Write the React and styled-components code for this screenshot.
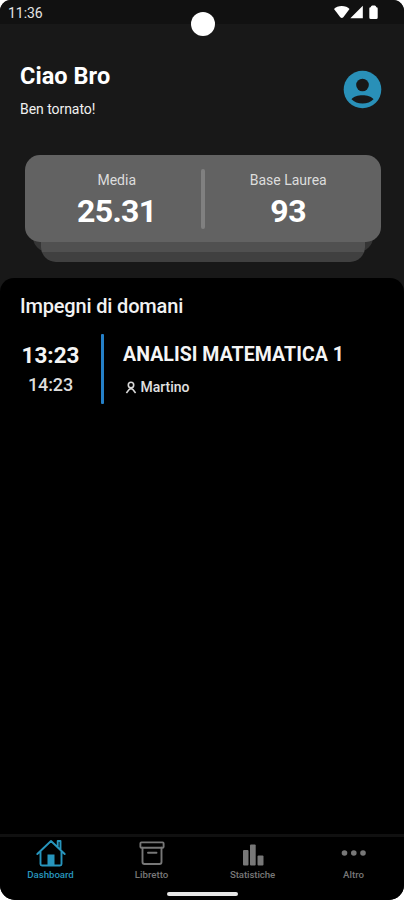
import React from "react";
import styled, { createGlobalStyle } from "styled-components";

const GlobalStyle = createGlobalStyle`
  * { box-sizing: border-box; }
  body { margin: 0; background: #fff; font-family: Roboto, sans-serif; }
`;

const Screen = styled.div`
  width: 404px;
  height: 900px;
  display: flex;
  flex-direction: column;
  overflow: hidden;
  border-radius: 11px 11px 15px 15px;
  background: #181818;
  color: #fff;
`;

const StatusBar = styled.header`
  height: 24px;
  flex: none;
  display: flex;
  justify-content: space-between;
  padding: 5px 25px 0 8px;
  background: #111;
  position: relative;
`;

const CameraHole = styled.span`
  position: absolute;
  left: 191px;
  top: 12px;
  width: 24px;
  height: 24px;
  border-radius: 50%;
  background: #fff;
`;

const Text = styled.span`
  display: block;
  margin: 0;
  white-space: nowrap;
  font-size: ${(p) => p.$size}px;
  line-height: ${(p) => p.$line}px;
  font-weight: ${(p) => p.$weight || 400};
  letter-spacing: ${(p) => p.$track || 0}px;
  color: ${(p) => p.$color || "#fff"};
`;

const Greeting = styled.section`
  height: 131px;
  flex: none;
  display: flex;
  justify-content: space-between;
  padding: 38px 22px 0 20px;
`;

const GreetingText = styled.div`
  display: flex;
  flex-direction: column;
  gap: 9px;
`;

const Avatar = styled.svg`
  width: 39px;
  height: 39px;
  margin-top: 8px;
`;

const CardStack = styled.section`
  height: 123px;
  flex: none;
  display: grid;
  padding-left: 25px;
  align-items: start;
`;

const Sheet = styled.div`
  grid-area: 1 / 1;
  width: ${(p) => p.$width}px;
  height: ${(p) => p.$height}px;
  margin-left: ${(p) => p.$inset}px;
  border-radius: 15px;
  background: ${(p) => p.$color};
`;

const SummaryCard = styled(Sheet)`
  display: grid;
  grid-template-columns: 175.5px 4px 1fr;
  padding-top: 14px;
`;

const Stat = styled.div`
  display: flex;
  flex-direction: column;
  align-items: center;
  padding-top: 2px;
  padding-left: ${(p) => p.$shift || 0}px;
  padding-right: ${(p) => p.$pull || 0}px;
  gap: 5px;
`;

const Divider = styled.div`
  width: 4px;
  height: 60px;
  border-radius: 2px;
  background: #808080;
`;

const Agenda = styled.main`
  flex: 1;
  padding: 16px 20px 0;
  border-radius: 14px 14px 0 0;
  background: #000;
`;

const Event = styled.article`
  display: grid;
  grid-template-columns: 61px 3px 1fr;
  column-gap: 19.5px;
  height: 70px;
  margin-top: 16px;
`;

const Times = styled.div`
  display: flex;
  flex-direction: column;
  align-items: center;
  padding-top: 8px;
  gap: 6px;
`;

const EventBar = styled.div`
  border-radius: 1px;
  background: #2580c8;
`;

const Details = styled.div`
  display: flex;
  flex-direction: column;
  padding-top: 7px;
  gap: 10px;
`;

const Teacher = styled.div`
  display: flex;
  align-items: center;
  gap: 4px;
  padding-left: 1.5px;
`;

const BottomNav = styled.nav`
  height: 66px;
  flex: none;
  display: grid;
  grid-template-columns: repeat(4, 1fr);
  border-top: 3px solid #101010;
  background: #000;
  position: relative;
`;

const NavItem = styled.div`
  display: flex;
  flex-direction: column;
  align-items: center;
  color: ${(p) => (p.$active ? "#2795bd" : "#777")};
`;

const NavIcon = styled.svg`
  width: 32px;
  height: 32px;
  flex: none;
`;

const HomeIndicator = styled.span`
  position: absolute;
  left: 167px;
  top: 54.5px;
  width: 71px;
  height: 4px;
  border-radius: 2px;
  background: #e7e7e7;
`;

const icons = {
  home: (
    <g fill="none" stroke="currentColor" strokeWidth="1.9" strokeLinecap="round" strokeLinejoin="round">
      <path d="M2.3 17 16 4 29.7 17M5.5 14.5V27q0 1.5 1.5 1.5h18q1.5 0 1.5-1.5V14.5M22.7 9.5V4h2.8v8.5" />
      <path d="M12.5 17.5h7v11h-7z" fill="currentColor" stroke="none" />
    </g>
  ),
  archive: (
    <g fill="none" stroke="currentColor" strokeWidth="1.9">
      <rect x="4.4" y="5.4" width="23.2" height="5.3" rx="1" />
      <path d="M6.5 10.7V25q0 2 2 2h15q2 0 2-2V10.7M12 15.8h8.5" strokeLinecap="round" />
    </g>
  ),
  chart: (
    <g fill="currentColor">
      <rect x="6" y="13" width="5.5" height="15.5" rx="1" />
      <rect x="13" y="7.5" width="5.7" height="21" rx="1" />
      <rect x="20.5" y="18.5" width="6" height="10" rx="1" />
    </g>
  ),
  more: (
    <g fill="currentColor">
      <circle cx="6.5" cy="16" r="2.8" />
      <circle cx="15.8" cy="16" r="2.8" />
      <circle cx="25" cy="16" r="2.8" />
    </g>
  ),
};

const tabs = [
  { label: "Dashboard", icon: "home", active: true, track: -0.05 },
  { label: "Libretto", icon: "archive", track: 0 },
  { label: "Statistiche", icon: "chart", track: -0.1 },
  { label: "Altro", icon: "more", track: 0 },
];

export default function App() {
  return (
    <>
      <GlobalStyle />
      <Screen>
        <StatusBar>
          <Text $size={14} $line={16} $track={-0.05} $color="#e4e4e4">11:36</Text>
          <svg width="47" height="16" fill="#fff">
            <path d="M2 4.1C5-.1 14.5-.1 17.5 4.1L11.3 12.2Q9.8 13.6 8.3 12.2Z" />
            <path d="M18.3 13.2 30.8.7v12.5z" />
            <path d="M37.3 3.5Q37.3 2.2 38.6 2.2 39.2.6 40.2.6h2.6q1 0 1.6 1.6Q45.7 2.2 45.7 3.5v9q0 1.5-1.5 1.5h-5.4q-1.5 0-1.5-1.5Z" />
          </svg>
          <CameraHole />
        </StatusBar>
        <Greeting>
          <GreetingText>
            <Text as="h1" $size={23.5} $line={29} $weight={700} $track={0.05}>Ciao Bro</Text>
            <Text $size={14} $line={18} $weight={400} $track={-0.05} $color="#f0f0f0">Ben tornato!</Text>
          </GreetingText>
          <Avatar viewBox="0 0 39 39">
            <circle cx="19.5" cy="19.5" r="18.8" fill="#2990b8" />
            <circle cx="19.5" cy="15" r="6.3" fill="#181818" />
            <path d="M8.5 29.3C12.5 24 26.5 24 30.5 29.3 25.5 35 13.5 35 8.5 29.3Z" fill="#181818" />
          </Avatar>
        </Greeting>
        <CardStack>
          <Sheet $width={340} $height={97} $inset={8} $color="#353535" />
          <Sheet $width={324} $height={107} $inset={16} $color="linear-gradient(#505050 97px, #404040 97px)" />
          <SummaryCard $width={356} $height={87} $inset={0} $color="#626262">
            <Stat $shift={8}>
              <Text $size={14} $line={18} $color="#ddd">Media</Text>
              <Text $size={32} $line={34} $weight={700} $track={-0.6}>25.31</Text>
            </Stat>
            <Divider />
            <Stat $pull={9}>
              <Text $size={14} $line={18} $color="#ddd">Base Laurea</Text>
              <Text $size={32} $line={34} $weight={700} $track={-0.4}>93</Text>
            </Stat>
          </SummaryCard>
        </CardStack>
        <Agenda>
          <Text $size={20} $line={24} $weight={500} $track={-0.17} $color="#f2f2f2">Impegni di domani</Text>
          <Event>
            <Times>
              <Text $size={22.5} $line={26} $weight={700} $color="#f5f5f5">13:23</Text>
              <Text $size={18} $line={22} $weight={500} $track={-0.1} $color="#ddd">14:23</Text>
            </Times>
            <EventBar />
            <Details>
              <Text $size={19.5} $line={27} $weight={700} $track={0.05} $color="#f5f5f5">ANALISI MATEMATICA 1</Text>
              <Teacher>
                <svg width="12" height="13" fill="none" stroke="#d8d8d8" strokeWidth="1.6">
                  <circle cx="6" cy="4" r="2.7" />
                  <path d="M1.4 12 4.3 8.3Q6 6.8 7.7 8.3L10.6 12" />
                </svg>
                <Text $size={14} $line={19} $weight={500} $color="#e0e0e0">Martino</Text>
              </Teacher>
            </Details>
          </Event>
        </Agenda>
        <BottomNav>
          {tabs.map((tab) => (
            <NavItem key={tab.label} $active={tab.active}>
              <NavIcon viewBox="0 0 32 32">{icons[tab.icon]}</NavIcon>
              <Text $size={9.7} $line={12} $weight={500} $track={tab.track} $color="inherit">{tab.label}</Text>
            </NavItem>
          ))}
          <HomeIndicator />
        </BottomNav>
      </Screen>
    </>
  );
}
